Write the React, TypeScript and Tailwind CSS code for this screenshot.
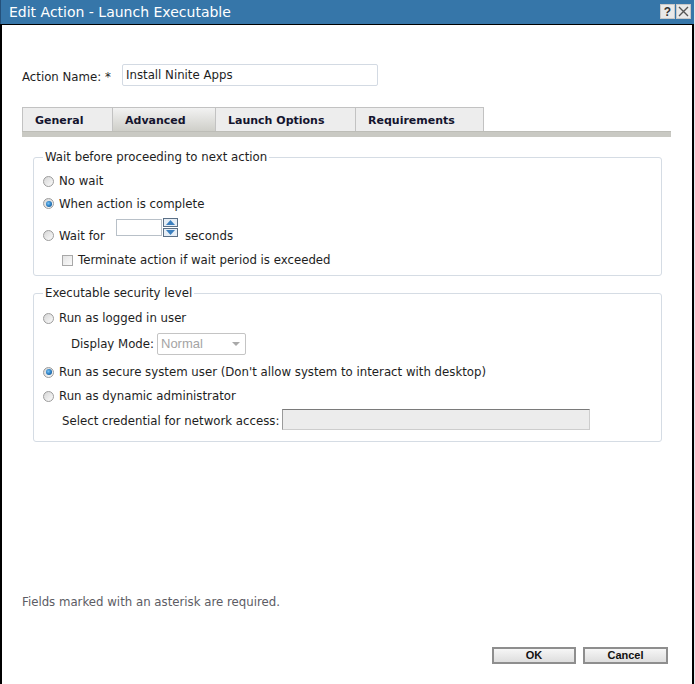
import React from "react";

const font = { fontFamily: '"DejaVu Sans", Verdana, sans-serif' };

function Radio({ checked }: { checked?: boolean }) {
  return (
    <span className="w-[11px] h-[11px] rounded-full border border-[#9c9c9c] bg-gradient-to-br from-[#d6d6d6] to-[#fbfbfb] flex items-center justify-center shrink-0">
      {checked ? (
        <span className="w-[6px] h-[6px] rounded-full bg-[radial-gradient(circle_at_40%_40%,#7cc4f4_0%,#2a7fc4_50%,#0d3f72_100%)]" />
      ) : null}
    </span>
  );
}

function RadioRow({ checked, label, className }: { checked?: boolean; label: string; className?: string }) {
  return (
    <div className={"flex items-center " + (className || "")}>
      <Radio checked={checked} />
      <span className="ml-[5px] leading-[14px] whitespace-nowrap">{label}</span>
    </div>
  );
}

export default function App() {
  return (
    <div className="w-[695px] h-[684px] flex bg-[#e4e7eb] overflow-hidden text-[11.75px] text-[#1e1e1e]" style={font}>
      <div className="w-[694px] h-full flex flex-col bg-white">
        {/* Title bar */}
        <div className="h-[24px] bg-[#3676a9] flex items-center justify-between pl-[8px] pr-[3px] border-l border-[#24507a]">
          <span className="text-white text-[14px] leading-[16px]">Edit Action - Launch Executable</span>
          <div className="flex gap-[1px] mt-[-1px]">
            <span className="w-[15px] h-[15px] bg-[#e9e9e9] border border-[#c8c8c8] flex items-center justify-center text-[12px] font-bold text-[#333] leading-none" style={{ fontFamily: '"Liberation Sans", Arial, sans-serif' }}>?</span>
            <span className="w-[15px] h-[15px] bg-[#e9e9e9] border border-[#c8c8c8] flex items-center justify-center">
              <svg width="11" height="11" viewBox="0 0 11 11">
                <path d="M1 1 L10 10 M10 1 L1 10" stroke="#555" strokeWidth="1.4" fill="none" />
              </svg>
            </span>
          </div>
        </div>
        <div className="h-px bg-black" />

        {/* Body */}
        <div className="flex-1 flex flex-col border-l-2 border-r-2 border-black pl-[20px]">
          {/* Action name */}
          <div className="mt-[39px] flex items-center h-[22px]">
            <span className="w-[100px] pt-[3px] leading-[14px]">Action Name: *</span>
            <div className="w-[256px] h-[22px] border border-[#d3dae3] rounded-[2px] flex items-center pl-[3px] leading-[14px]">
              Install Ninite Apps
            </div>
          </div>

          {/* Tabs */}
          <div className="mt-[21px] flex h-[24px] font-bold text-[11px] text-[#14142e]">
            <div className="w-[91px] h-full border border-b-0 border-[#c2c2c2] bg-[#ededed] pl-[12px] pt-[3px] flex items-center">General</div>
            <div className="w-[104px] -ml-px h-full border border-b-0 border-[#c2c2c2] bg-gradient-to-b from-[#f2f2f2] to-[#cfcfc9] pl-[12px] pt-[3px] flex items-center">Advanced</div>
            <div className="w-[141px] -ml-px h-full border border-b-0 border-[#c2c2c2] bg-[#ededed] pl-[12px] pt-[3px] flex items-center">Launch Options</div>
            <div className="w-[129px] -ml-px h-full border border-b-0 border-[#c2c2c2] bg-[#ededed] pl-[12px] pt-[3px] flex items-center">Requirements</div>
          </div>
          <div className="w-[649px] h-[6px] bg-[#c9c9c3] border-t border-[#bdbdb7]" />

          {/* Fieldset 1 */}
          <fieldset className="ml-[11px] mt-[13px] w-[629px] border border-[#d5dce4] rounded-[3px] pl-[9px] pb-[8px]">
            <legend className="px-[2px] leading-[14px]">Wait before proceeding to next action</legend>
            <RadioRow className="mt-[6px] h-[22px]" label="No wait" />
            <RadioRow className="h-[23px]" checked label="When action is complete" />
            <div className="flex items-start h-[28px]">
              <div className="mt-[15px]"><Radio /></div>
              <span className="ml-[5px] w-[57px] mt-[14px] leading-[14px]">Wait for</span>
              <div className="mt-[4px] w-[46px] h-[17px] border border-[#b8c0c8] bg-white" />
              <div className="mt-[3px] ml-[1px] flex flex-col gap-[1px]">
                <svg width="15" height="9" viewBox="0 0 15 9">
                  <rect x="0.5" y="0.5" width="14" height="8" fill="#e6eef6" stroke="#5a6f86" />
                  <path d="M3 7 L7.5 2 L12 7 Z" fill="#3a7fbf" />
                </svg>
                <svg width="15" height="9" viewBox="0 0 15 9">
                  <rect x="0.5" y="0.5" width="14" height="8" fill="#e6eef6" stroke="#5a6f86" />
                  <path d="M3 2 L7.5 7 L12 2 Z" fill="#3a7fbf" />
                </svg>
              </div>
              <span className="ml-[7px] mt-[14px] leading-[14px]">seconds</span>
            </div>
            <div className="mt-[10px] h-[14px] flex items-center">
              <span className="ml-[19px] w-[11px] h-[11px] border border-[#a8a8a8] bg-gradient-to-br from-[#e4e4e4] to-[#fafafa]" />
              <span className="ml-[5px] leading-[14px]">Terminate action if wait period is exceeded</span>
            </div>
          </fieldset>

          {/* Fieldset 2 */}
          <fieldset className="ml-[11px] mt-[10px] w-[629px] border border-[#d5dce4] rounded-[3px] pl-[9px] pb-[11px]">
            <legend className="px-[2px] leading-[14px]">Executable security level</legend>
            <RadioRow className="mt-[7px] h-[22px]" label="Run as logged in user" />
            <div className="mt-[4px] h-[22px] flex items-center">
              <span className="ml-[28px] w-[86px] leading-[14px] whitespace-nowrap">Display Mode:</span>
              <div className="w-[89px] h-[22px] border border-[#c4c4c4] rounded-[2px] flex items-center justify-between pl-[3px] pr-[5px] text-[#a4a4a4] leading-[14px]" style={{ fontFamily: '"Liberation Sans", Arial, sans-serif', fontSize: "13px" }}>
                <span>Normal</span>
                <svg width="8" height="4" viewBox="0 0 8 4">
                  <path d="M0 0 L8 0 L4 4 Z" fill="#a9a9a9" />
                </svg>
              </div>
            </div>
            <RadioRow className="mt-[6px] h-[22px]" checked label="Run as secure system user (Don't allow system to interact with desktop)" />
            <RadioRow className="mt-[2px] h-[22px]" label="Run as dynamic administrator" />
            <div className="mt-[2px] h-[21px] flex items-center">
              <span className="ml-[19px] w-[220px] leading-[14px] pt-[2px] whitespace-nowrap">Select credential for network access:</span>
              <div className="w-[308px] h-[21px] bg-[#ececec] border border-[#cdcdcd] border-t-[#7a7a7a] border-l-[#9a9a9a]" />
            </div>
          </fieldset>

          <div className="mt-[153px] leading-[14px] text-[#5c5c64]">Fields marked with an asterisk are required.</div>

          <div className="mt-[38px] flex justify-end pr-[24px] gap-[7px]" style={{ fontFamily: '"Liberation Sans", Arial, sans-serif' }}>
            <div className="w-[84px] h-[17px] border-2 border-[#8e8e8e] bg-gradient-to-b from-[#f6f6f6] to-[#dedede] flex items-center justify-center text-[11px] font-bold text-[#111] leading-none">OK</div>
            <div className="w-[85px] h-[17px] border-2 border-[#8e8e8e] bg-gradient-to-b from-[#f6f6f6] to-[#dedede] flex items-center justify-center text-[11px] font-bold text-[#111] leading-none">Cancel</div>
          </div>
        </div>
      </div>
    </div>
  );
}
